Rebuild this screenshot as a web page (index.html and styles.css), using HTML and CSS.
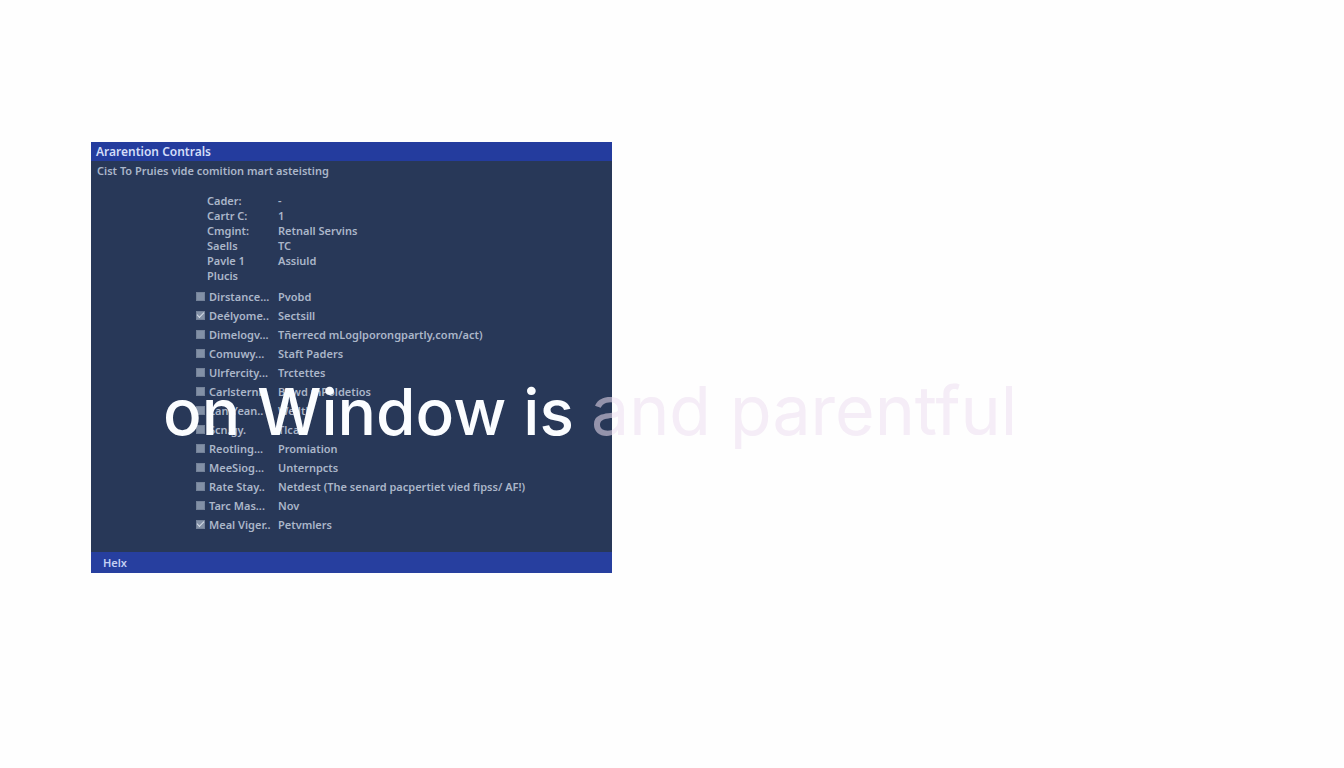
FILE: index.html
```html
<!DOCTYPE html>
<html lang="en">
<head>
    <meta charset="UTF-8">
    <meta name="viewport" content="width=device-width, initial-scale=1.0">
    <title>Ararention Contrals</title>
    <link rel="stylesheet" href="styles.css">
</head>
<body>
    <main class="stage">
        <section class="window">
            <h1 class="window-title">Ararention Contrals</h1>
            <div class="window-body">
                <p class="intro">Cist To Pruies vide comition mart asteisting</p>
                <dl class="details">
                    <dt>Cader:</dt><dd>-</dd>
                    <dt>Cartr C:</dt><dd>1</dd>
                    <dt>Cmgint:</dt><dd>Retnall Servins</dd>
                    <dt>Saells</dt><dd>TC</dd>
                    <dt>Pavle 1</dt><dd>Assiuld</dd>
                    <dt>Plucis</dt><dd></dd>
                </dl>
                <div class="options">
                    <label class="option"><input type="checkbox"><span>Dirstance...</span><span>Pvobd</span></label>
                    <label class="option"><input type="checkbox" checked><span>Deélyome..</span><span>Sectsill</span></label>
                    <label class="option"><input type="checkbox"><span>Dimelogv...</span><span>Tñerrecd mLoglporongpartly,com/act)</span></label>
                    <label class="option"><input type="checkbox"><span>Comuwy...</span><span>Staft Paders</span></label>
                    <label class="option"><input type="checkbox"><span>Ulrfercity...</span><span>Trctettes</span></label>
                    <label class="option"><input type="checkbox"><span>Carlsterni..</span><span>Bowd mPoldetios</span></label>
                    <label class="option"><input type="checkbox"><span>Lan Yean..</span><span>Wellth</span></label>
                    <label class="option"><input type="checkbox"><span>Scn.gy.</span><span>Tlca</span></label>
                    <label class="option"><input type="checkbox"><span>Reotling...</span><span>Promiation</span></label>
                    <label class="option"><input type="checkbox"><span>MeeSiog...</span><span>Unternpcts</span></label>
                    <label class="option"><input type="checkbox"><span>Rate Stay..</span><span>Netdest (The senard pacpertiet vied fipss/ AF!)</span></label>
                    <label class="option"><input type="checkbox"><span>Tarc Mas...</span><span>Nov</span></label>
                    <label class="option"><input type="checkbox" checked><span>Meal Viger..</span><span>Petvmlers</span></label>
                </div>
            </div>
            <footer class="window-footer">Helx</footer>
        </section>
        <p class="caption">on Window is <span class="caption-next">and parentful</span></p>
    </main>
</body>
</html>
```
FILE: styles.css
```css
* {
    box-sizing: border-box;
}
body {
    margin: 0;
    background-color: #fefefe;
    font-family: "Noto Sans", sans-serif;
    font-size: 11px;
    font-weight: 600;
    color: #abb6c9;
}
.stage {
    position: relative;
    min-height: 100vh;
    padding: 142px 91px;
}
.window {
    max-width: 521px;
    background-color: #283858;
}
.window-title {
    margin: 0;
    padding: 0 5px;
    background-color: #243c9e;
    color: #d3dcf8;
    font-size: 12px;
    font-weight: 600;
    line-height: 19px;
}
.window-body {
    padding: 0 6px 18px;
}
.intro {
    margin: 0 0 12px;
    line-height: 20px;
}
.details {
    display: grid;
    grid-template-columns: 71px 1fr;
    margin: 0 0 4px 110px;
    line-height: 15px;
}
.details dd {
    margin: 0;
}
.options {
    margin-left: 99px;
}
.option {
    display: grid;
    grid-template-columns: 10px 66px 1fr;
    align-items: center;
    column-gap: 3px;
    line-height: 19px;
    white-space: nowrap;
}
.option input {
    appearance: none;
    width: 9px;
    height: 9px;
    margin: 0;
    background-color: #8290a6;
    border: 1px solid #748299;
}
/* small tick drawn inside the box */
.option input:checked::before {
    content: "";
    display: block;
    width: 6px;
    height: 3px;
    border-left: 1px solid #d5dce6;
    border-bottom: 1px solid #d5dce6;
    transform: rotate(-45deg);
}
.window-footer {
    padding: 0 12px;
    background-color: #273f9f;
    color: #c5d0f3;
    font-weight: 600;
    line-height: 21px;
}
/* the caption runs across the window and the empty page */
.caption {
    position: absolute;
    top: 370px;
    left: 163px;
    margin: 0;
    color: #fbfdff;
    font-family: Inter, sans-serif;
    font-size: 64px;
    font-weight: 500;
    line-height: 80px;
    white-space: nowrap;
}
.caption-next {
    color: rgba(236, 223, 240, 0.55);
    font-size: 68px;
    font-weight: 400;
}
```
